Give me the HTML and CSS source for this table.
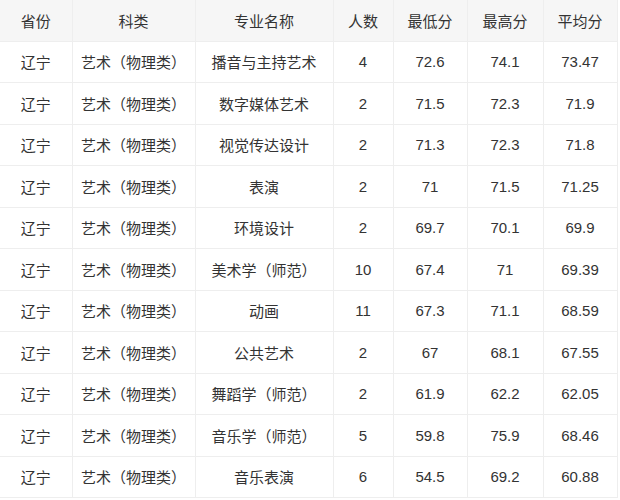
FILE: index.html
```html
<!DOCTYPE html>
<html lang="zh">
<head>
<meta charset="utf-8">
<link rel="stylesheet" href="styles.css">
</head>
<body>
<table class="scores">
<colgroup>
<col class="c1"><col class="c2"><col class="c3"><col class="c4"><col class="c5"><col class="c6"><col class="c7">
</colgroup>
<thead>
<tr><th>省份</th><th>科类</th><th>专业名称</th><th>人数</th><th>最低分</th><th>最高分</th><th>平均分</th></tr>
</thead>
<tbody>
<tr><td>辽宁</td><td>艺术（物理类）</td><td>播音与主持艺术</td><td>4</td><td>72.6</td><td>74.1</td><td>73.47</td></tr>
<tr><td>辽宁</td><td>艺术（物理类）</td><td>数字媒体艺术</td><td>2</td><td>71.5</td><td>72.3</td><td>71.9</td></tr>
<tr><td>辽宁</td><td>艺术（物理类）</td><td>视觉传达设计</td><td>2</td><td>71.3</td><td>72.3</td><td>71.8</td></tr>
<tr><td>辽宁</td><td>艺术（物理类）</td><td>表演</td><td>2</td><td>71</td><td>71.5</td><td>71.25</td></tr>
<tr><td>辽宁</td><td>艺术（物理类）</td><td>环境设计</td><td>2</td><td>69.7</td><td>70.1</td><td>69.9</td></tr>
<tr><td>辽宁</td><td>艺术（物理类）</td><td>美术学（师范）</td><td>10</td><td>67.4</td><td>71</td><td>69.39</td></tr>
<tr><td>辽宁</td><td>艺术（物理类）</td><td>动画</td><td>11</td><td>67.3</td><td>71.1</td><td>68.59</td></tr>
<tr><td>辽宁</td><td>艺术（物理类）</td><td>公共艺术</td><td>2</td><td>67</td><td>68.1</td><td>67.55</td></tr>
<tr><td>辽宁</td><td>艺术（物理类）</td><td>舞蹈学（师范）</td><td>2</td><td>61.9</td><td>62.2</td><td>62.05</td></tr>
<tr><td>辽宁</td><td>艺术（物理类）</td><td>音乐学（师范）</td><td>5</td><td>59.8</td><td>75.9</td><td>68.46</td></tr>
<tr><td>辽宁</td><td>艺术（物理类）</td><td>音乐表演</td><td>6</td><td>54.5</td><td>69.2</td><td>60.88</td></tr>
</tbody>
</table>
</body>
</html>
```
FILE: styles.css
```css
html, body {
  margin: 0;
  padding: 0;
  background: #ffffff;
}
.scores {
  width: 617px;
  table-layout: fixed;
  border-collapse: collapse;
  font-family: "Liberation Sans", "Noto Sans CJK SC", sans-serif;
  font-size: 15px;
  color: #333333;
}
.c1 { width: 72px; }
.c2 { width: 123px; }
.c3 { width: 138px; }
.c4 { width: 60px; }
.c5 { width: 74px; }
.c6 { width: 76px; }
.c7 { width: 74px; }
.scores th,
.scores td {
  height: 40.5px;
  padding: 0;
  border: 1px solid #eeeeee;
  text-align: center;
  vertical-align: middle;
  font-weight: normal;
  white-space: nowrap;
}
.scores thead th {
  background: #f6f6f6;
  border-top: none;
}
.scores th:first-child,
.scores td:first-child {
  border-left: none;
}
```
